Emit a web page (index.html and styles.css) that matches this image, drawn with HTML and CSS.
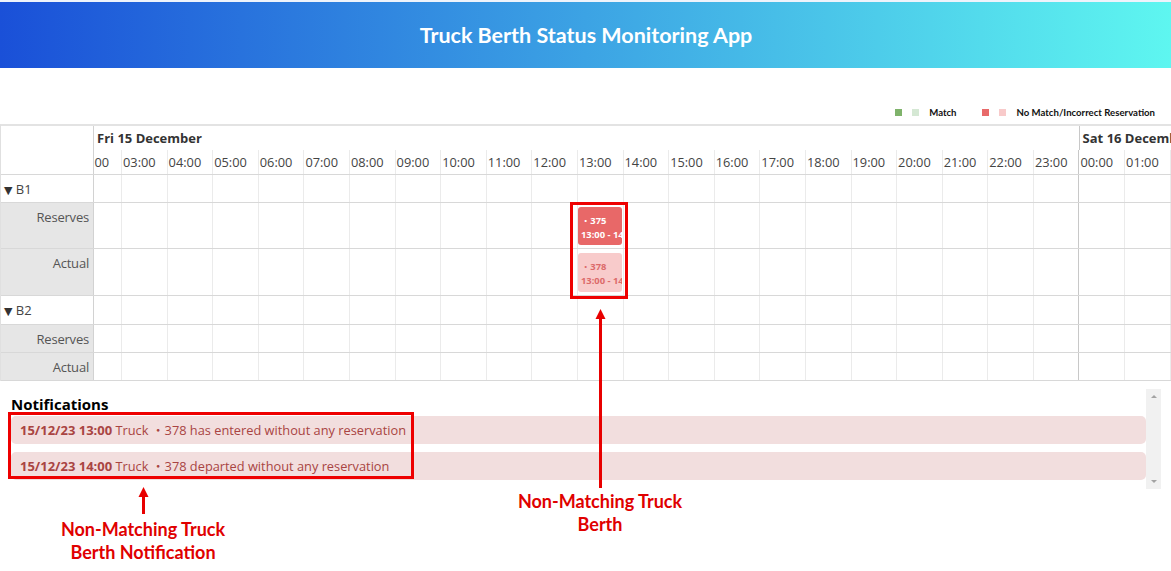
FILE: index.html
```html
<!DOCTYPE html>
<html lang="en">
<head>
<meta charset="utf-8">
<title>Truck Berth Status Monitoring App</title>
<link rel="stylesheet" href="styles.css">
</head>
<body>
<header class="app-header"><h1>Truck Berth Status Monitoring App</h1></header>

<div class="legend">
  <span class="sw sw-g1"></span><span class="sw sw-g2"></span><span class="lg-text">Match</span>
  <span class="sw sw-r1"></span><span class="sw sw-r2"></span><span class="lg-text">No Match/Incorrect Reservation</span>
</div>

<div class="sched">
  <div class="sched-head">
    <div class="corner"></div>
    <div class="head-right">
      <div class="date-row">
        <div class="date d1">Fri 15 December</div>
        <div class="date d2">Sat 16 December</div>
      </div>
      <div class="track time-row">
        <div class="c">02:00</div><div class="c">03:00</div><div class="c">04:00</div><div class="c">05:00</div><div class="c">06:00</div><div class="c">07:00</div><div class="c">08:00</div><div class="c">09:00</div><div class="c">10:00</div><div class="c">11:00</div><div class="c">12:00</div><div class="c">13:00</div><div class="c">14:00</div><div class="c">15:00</div><div class="c">16:00</div><div class="c">17:00</div><div class="c">18:00</div><div class="c">19:00</div><div class="c">20:00</div><div class="c">21:00</div><div class="c">22:00</div><div class="c">23:00</div><div class="c day">00:00</div><div class="c">01:00</div><div class="c">02:00</div>
      </div>
    </div>
  </div>

  <div class="row r-grp1">
    <div class="lab grp"><span class="tri">▼</span> B1</div>
    <div class="track">
      <div class="c"></div><div class="c"></div><div class="c"></div><div class="c"></div><div class="c"></div><div class="c"></div><div class="c"></div><div class="c"></div><div class="c"></div><div class="c"></div><div class="c"></div><div class="c"></div><div class="c"></div><div class="c"></div><div class="c"></div><div class="c"></div><div class="c"></div><div class="c"></div><div class="c"></div><div class="c"></div><div class="c"></div><div class="c"></div><div class="c day"></div><div class="c"></div><div class="c"></div>
    </div>
  </div>
  <div class="row r-big1">
    <div class="lab sub">Reserves</div>
    <div class="track">
      <div class="c"></div><div class="c"></div><div class="c"></div><div class="c"></div><div class="c"></div><div class="c"></div><div class="c"></div><div class="c"></div><div class="c"></div><div class="c"></div><div class="c"></div><div class="c ev-cell"><div class="ev ev-res"><div><span class="dot">・</span>375</div><div>13:00 - 14:00</div></div></div><div class="c"></div><div class="c"></div><div class="c"></div><div class="c"></div><div class="c"></div><div class="c"></div><div class="c"></div><div class="c"></div><div class="c"></div><div class="c"></div><div class="c day"></div><div class="c"></div><div class="c"></div>
    </div>
  </div>
  <div class="row r-big2">
    <div class="lab sub">Actual</div>
    <div class="track">
      <div class="c"></div><div class="c"></div><div class="c"></div><div class="c"></div><div class="c"></div><div class="c"></div><div class="c"></div><div class="c"></div><div class="c"></div><div class="c"></div><div class="c"></div><div class="c ev-cell"><div class="ev ev-act"><div><span class="dot">・</span>378</div><div>13:00 - 14:00</div></div></div><div class="c"></div><div class="c"></div><div class="c"></div><div class="c"></div><div class="c"></div><div class="c"></div><div class="c"></div><div class="c"></div><div class="c"></div><div class="c"></div><div class="c day"></div><div class="c"></div><div class="c"></div>
    </div>
  </div>
  <div class="row r-grp2">
    <div class="lab grp"><span class="tri">▼</span> B2</div>
    <div class="track">
      <div class="c"></div><div class="c"></div><div class="c"></div><div class="c"></div><div class="c"></div><div class="c"></div><div class="c"></div><div class="c"></div><div class="c"></div><div class="c"></div><div class="c"></div><div class="c"></div><div class="c"></div><div class="c"></div><div class="c"></div><div class="c"></div><div class="c"></div><div class="c"></div><div class="c"></div><div class="c"></div><div class="c"></div><div class="c"></div><div class="c day"></div><div class="c"></div><div class="c"></div>
    </div>
  </div>
  <div class="row r-small">
    <div class="lab sub">Reserves</div>
    <div class="track">
      <div class="c"></div><div class="c"></div><div class="c"></div><div class="c"></div><div class="c"></div><div class="c"></div><div class="c"></div><div class="c"></div><div class="c"></div><div class="c"></div><div class="c"></div><div class="c"></div><div class="c"></div><div class="c"></div><div class="c"></div><div class="c"></div><div class="c"></div><div class="c"></div><div class="c"></div><div class="c"></div><div class="c"></div><div class="c"></div><div class="c day"></div><div class="c"></div><div class="c"></div>
    </div>
  </div>
  <div class="row r-small">
    <div class="lab sub">Actual</div>
    <div class="track">
      <div class="c"></div><div class="c"></div><div class="c"></div><div class="c"></div><div class="c"></div><div class="c"></div><div class="c"></div><div class="c"></div><div class="c"></div><div class="c"></div><div class="c"></div><div class="c"></div><div class="c"></div><div class="c"></div><div class="c"></div><div class="c"></div><div class="c"></div><div class="c"></div><div class="c"></div><div class="c"></div><div class="c"></div><div class="c"></div><div class="c day"></div><div class="c"></div><div class="c"></div>
    </div>
  </div>
</div>

<section class="notif">
  <div class="notif-body">
    <h2>Notifications</h2>
    <div class="alert"><b>15/12/23 13:00</b> Truck <span class="dot">・</span>378 has entered without any reservation</div>
    <div class="alert"><b>15/12/23 14:00</b> Truck <span class="dot">・</span>378 departed without any reservation</div>
  </div>
  <div class="scrollbar"><span class="sb-up"></span><span class="sb-down"></span></div>
</section>

<div class="ann-box ann-box-ev"></div>
<div class="ann-box ann-box-notif"></div>
<svg class="ann-arrows" width="1171" height="571" viewBox="0 0 1171 571">
  <line x1="600.5" y1="488" x2="600.5" y2="316" stroke="#e80000" stroke-width="3"/>
  <polygon points="600.5,309 595.5,319 605.5,319" fill="#e80000"/>
  <line x1="143.5" y1="514" x2="143.5" y2="494" stroke="#e80000" stroke-width="3"/>
  <polygon points="143.5,487 138.5,497 148.5,497" fill="#e80000"/>
</svg>
<div class="ann-text ann-text-ev">Non-Matching Truck<br>Berth</div>
<div class="ann-text ann-text-notif">Non-Matching Truck<br>Berth Notification</div>
</body>
</html>
```
FILE: styles.css
```css
* { box-sizing: border-box; }
html, body { margin: 0; padding: 0; }
body {
  position: relative;
  width: 1171px;
  height: 571px;
  overflow: hidden;
  background: #fff;
  font-family: "Open Sans", "Noto Sans CJK JP", sans-serif;
  color: #444;
}

.app-header {
  height: 68px;
  border-top: 2px solid #eef3fb;
  background: linear-gradient(to right, #1a50d8, #5ef6f0);
  display: flex;
  align-items: center;
  justify-content: center;
}
.app-header h1 {
  margin: 0;
  font: 700 21.5px/1 Lato, "Open Sans", sans-serif;
  color: #fff;
  padding: 2px 0 0 1px;
}

.legend {
  height: 56px;
  display: flex;
  justify-content: flex-end;
  align-items: flex-end;
  padding: 0 16px 5px 0;
}
.sw {
  width: 7px;
  height: 7px;
  margin-right: 10px;
  margin-bottom: 3px;
}
.sw-g1 { background: #7fb36b; }
.sw-g2 { background: #d5e8d4; }
.sw-r1 { background: #e86a6a; margin-left: 25px; }
.sw-r2 { background: #f8caca; margin-right: 11px; }
.lg-text {
  font: 700 9.6px/13px Lato, sans-serif;
  color: #111;
}

.sched {
  border-top: 2px solid #e3e3e3;
  border-left: 1px solid #e0e0e0;
  overflow: hidden;
}
.sched-head {
  display: flex;
  border-bottom: 1px solid #d8d8d8;
}
.corner {
  width: 93px;
  flex: none;
  border-right: 1px solid #d2d2d2;
}
.head-right {
  flex: 1;
  min-width: 0;
  overflow: hidden;
}
.date-row {
  display: flex;
  height: 24px;
}
.date {
  flex: none;
  font-size: 13px;
  font-weight: 700;
  line-height: 24px;
  color: #333;
  white-space: nowrap;
  padding-left: 3px;
}
.d1 { width: 984.6px; }
.d2 { width: 200px; border-left: 1px solid #c8c8c8; }

.track {
  display: flex;
  flex: 1;
  min-width: 0;
  overflow: hidden;
}
.track > .c {
  flex: none;
  width: 45.6px;
  border-left: 1px solid #ebebeb;
}
.track > .c:first-child { margin-left: -18.6px; }
.track > .c.day { border-left-color: #c8c8c8; }

.time-row { height: 24px; }
.time-row > .c {
  font-size: 12.8px;
  line-height: 24px;
  padding-left: 1px;
  color: #444;
  white-space: nowrap;
}
.time-row > .c:first-child { padding-left: 0; }

.row {
  display: flex;
  border-bottom: 1px solid #d8d8d8;
}
.r-grp1 { height: 28px; }
.r-big1 { height: 46px; }
.r-big2 { height: 47px; }
.r-grp2 { height: 29px; }
.r-small { height: 28px; }

.lab {
  width: 93px;
  flex: none;
  border-right: 1px solid #d2d2d2;
  font-size: 13px;
  line-height: 18px;
  padding-top: 5px;
  white-space: nowrap;
}
.lab.grp { padding-left: 3px; color: #444; }
.tri { font-family: "DejaVu Sans", sans-serif; font-size: 11px; color: #333; }
.lab.sub {
  background: #e6e6e6;
  text-align: right;
  padding-right: 4px;
  color: #555;
  letter-spacing: -0.2px;
}

.ev-cell {
  display: flex;
  padding: 4px 1px 3px 0;
}
.ev {
  flex: 1;
  min-width: 0;
  border-radius: 3px;
  overflow: hidden;
  white-space: nowrap;
  font-size: 9.4px;
  font-weight: 700;
  line-height: 14px;
  padding: 6px 0 0 3px;
}
.ev-res { background: #e86868; color: #fff; }
.ev-act { background: #f8cbcb; color: #dc6a6a; }
.dot { font-family: "Noto Sans CJK JP", sans-serif; font-weight: 400; }

.notif {
  display: flex;
  height: 100px;
  margin: 8px 10px 0 8px;
}
.notif-body {
  flex: 1;
  min-width: 0;
  padding: 5px 0 0 3px;
}
.notif h2 {
  margin: 0 0 2px;
  font: 700 15px/20px "Open Sans", sans-serif;
  color: #000;
}
.alert {
  height: 28px;
  margin-bottom: 8px;
  border-radius: 5px;
  background: #f2dede;
  color: #a94442;
  font-size: 12.8px;
  line-height: 28px;
  padding-left: 9px;
  white-space: nowrap;
}
.alert b { font-size: 13px; }
.scrollbar {
  width: 15px;
  flex: none;
  background: #f1f1f1;
  display: flex;
  flex-direction: column;
  justify-content: space-between;
  align-items: center;
  padding: 6px 0;
}
.sb-up, .sb-down {
  width: 0;
  height: 0;
  border-left: 3px solid transparent;
  border-right: 3px solid transparent;
}
.sb-up { border-bottom: 3px solid #a3a3a3; }
.sb-down { border-top: 3px solid #a3a3a3; }

/* annotation overlays */
.ann-box {
  position: absolute;
  border: 3px solid #ee0000;
}
.ann-box-ev { left: 570px; top: 202px; width: 58px; height: 97px; }
.ann-box-notif { left: 8px; top: 412px; width: 406px; height: 67px; }
.ann-arrows {
  position: absolute;
  left: 0;
  top: 0;
}
.ann-text {
  position: absolute;
  transform: translateX(-50%);
  text-align: center;
  white-space: nowrap;
  font: 700 18px/23px Lato, sans-serif;
  color: #e00000;
}
.ann-text-ev { left: 600px; top: 490px; }
.ann-text-notif { left: 143px; top: 518px; }
```
